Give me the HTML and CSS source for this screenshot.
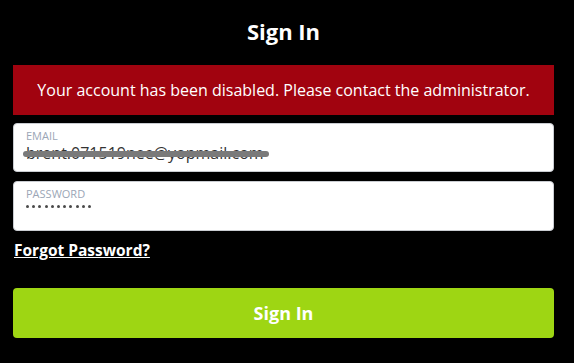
FILE: index.html
```html
<!DOCTYPE html>
<html>
<head>
<meta charset="utf-8">
<link rel="stylesheet" href="styles.css">
</head>
<body>
<main class="signin">
  <h1 class="title">Sign In</h1>
  <div class="alert">Your account has been disabled. Please contact the administrator.</div>
  <div class="field">
    <label class="label">EMAIL</label>
    <div class="value redacted"><span>brent.071519nee@yopmail.com</span><i class="bar"></i></div>
  </div>
  <div class="field">
    <label class="label">PASSWORD</label>
    <div class="dots" aria-label="password hidden">
      <span></span><span></span><span></span><span></span><span></span><span></span><span></span><span></span><span></span><span></span><span></span>
    </div>
  </div>
  <a class="forgot" href="#">Forgot Password?</a>
  <button class="btn">Sign In</button>
</main>
</body>
</html>
```
FILE: styles.css
```css
html, body {
  margin: 0;
  padding: 0;
  background: #000;
}
body {
  font-family: "Open Sans", "Noto Sans", sans-serif;
  color: #fff;
}
.signin {
  width: 541px;
  margin-left: 13px;
  display: flex;
  flex-direction: column;
}
.title {
  margin: 0;
  padding-top: 15px;
  height: 65px;
  box-sizing: border-box;
  font-size: 22px;
  font-weight: 700;
  line-height: 32px;
  text-align: center;
}
.alert {
  background: #a1030f;
  height: 50px;
  display: flex;
  align-items: center;
  justify-content: center;
  font-size: 16px;
  margin-bottom: 8px;
}
.field {
  background: #fff;
  border: 1px solid #c9ccd1;
  border-radius: 4px;
  height: 49px;
  box-sizing: border-box;
  padding: 5px 12px 0;
  margin-bottom: 9px;
}
.field + .field {
  height: 50px;
}
.label {
  display: block;
  font-size: 11px;
  line-height: 13px;
  color: #9ba6b6;
}
.value {
  font-size: 16px;
  line-height: 17px;
  color: #333;
}
.redacted {
  position: relative;
  display: inline-block;
  margin-top: -3px;
}
.bar {
  position: absolute;
  left: -3px;
  right: -5px;
  top: 6px;
  height: 6px;
  border-radius: 3px;
  background: #7a7a7a;
}
.dots {
  display: flex;
  gap: 3.2px;
  margin-top: 5px;
}
.dots span {
  width: 3px;
  height: 3px;
  border-radius: 50%;
  background: #4a4a4a;
}
.forgot {
  color: #fff;
  font-weight: 700;
  font-size: 15.5px;
  line-height: 20px;
  align-self: flex-start;
  margin-left: 1px;
  text-decoration: underline;
}
.btn {
  margin-top: 28px;
  height: 50px;
  border: 0;
  border-radius: 4px;
  background: #9ed613;
  color: #fff;
  font-family: "Open Sans", "Noto Sans", sans-serif;
  font-size: 18px;
  font-weight: 700;
}
```
